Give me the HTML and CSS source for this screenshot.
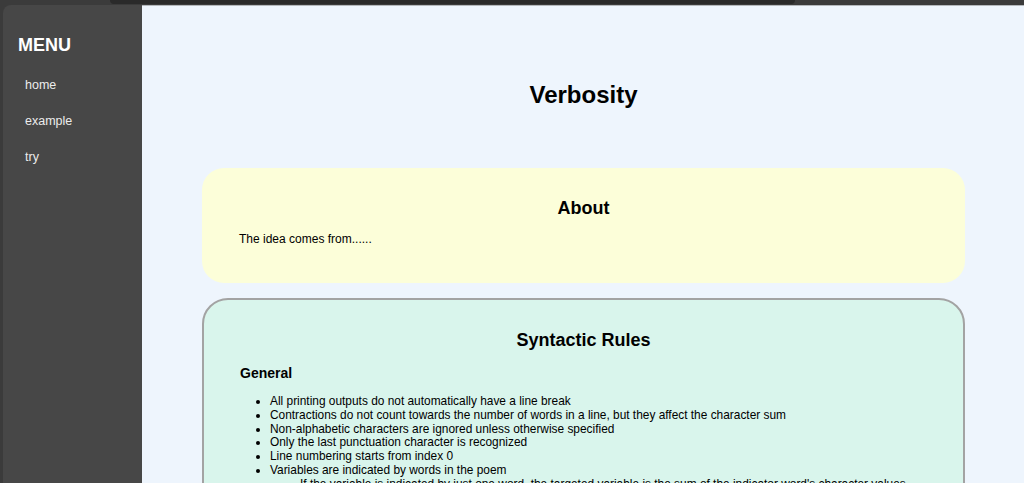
FILE: index.html
```html
<!DOCTYPE html>
<html lang="en">
<head>
<meta charset="utf-8">
<title>Verbosity</title>
<link rel="stylesheet" href="styles.css">
</head>
<body>
<div class="topstrip"><div class="tab-shadow"></div></div>
<div class="frame">
  <nav class="sidebar">
    <h2 class="menu-title">MENU</h2>
    <ul class="menu">
      <li><a href="#">home</a></li>
      <li><a href="#">example</a></li>
      <li><a href="#">try</a></li>
    </ul>
  </nav>
  <main class="main">
    <h1 class="page-title">Verbosity</h1>
    <section class="card card-about">
      <h2 class="card-title">About</h2>
      <p class="card-text">The idea comes from......</p>
    </section>
    <section class="card card-rules">
      <h2 class="card-title">Syntactic Rules</h2>
      <h3 class="sub-title">General</h3>
      <ul class="rules">
        <li>All printing outputs do not automatically have a line break</li>
        <li>Contractions do not count towards the number of words in a line, but they affect the character sum</li>
        <li>Non-alphabetic characters are ignored unless otherwise specified</li>
        <li>Only the last punctuation character is recognized</li>
        <li>Line numbering starts from index 0</li>
        <li>Variables are indicated by words in the poem
          <ul class="rules-sub">
            <li>If the variable is indicated by just one word, the targeted variable is the sum of the indicator word's character values</li>
            <li>If the variable is indicated by more than one word, the targeted variable is the sum of all the words' character values</li>
          </ul>
        </li>
      </ul>
    </section>
  </main>
</div>
</body>
</html>
```
FILE: styles.css
```css
html, body {
  margin: 0;
  padding: 0;
  height: 100%;
}
body {
  background: #3b3b3b;
  font-family: "Liberation Sans", Arial, sans-serif;
  font-size: 12px;
  color: #000;
  overflow: hidden;
}
.topstrip {
  height: 5px;
  display: flex;
}
.tab-shadow {
  margin-left: 110px;
  width: 685px;
  height: 4px;
  background: #2a2a2a;
  border-radius: 0 0 8px 8px;
}
.frame {
  display: flex;
  height: calc(100% - 5px);
  padding-left: 3px;
}
.sidebar {
  width: 139px;
  flex: none;
  background: #474747;
  border-top-left-radius: 8px;
  padding-top: 30px;
  box-sizing: border-box;
}
.menu-title {
  margin: 0 0 0 15px;
  font-size: 18px;
  line-height: 21px;
  font-weight: bold;
  color: #fff;
}
.menu {
  list-style: none;
  margin: 22px 0 0 0;
  padding: 0 0 0 22px;
}
.menu li {
  height: 36px;
  line-height: 14px;
}
.menu a {
  color: #ececec;
  text-decoration: none;
  font-size: 12.5px;
}
.main {
  flex: 1;
  background: #eef5fd;
  border-top: 1px solid #b4b8bc;
  padding: 75px 59px 0 60px;
}
.page-title {
  margin: 0 0 59px 0;
  text-align: center;
  font-size: 24px;
  line-height: 28px;
  font-weight: bold;
}
.card {
  border-radius: 22px;
}
.card-about {
  background: #fcfed9;
  padding: 30px 37px 37px 37px;
}
.card-rules {
  margin-top: 15px;
  background: #d9f5ec;
  border: 2px solid #a3a3a3;
  border-radius: 26px;
  padding: 30px 36px 20px 36px;
}
.card-title {
  margin: 0;
  text-align: center;
  font-size: 18px;
  line-height: 21px;
  font-weight: bold;
}
.card-text {
  margin: 13px 0 0 0;
  line-height: 14px;
}
.sub-title {
  margin: 14px 0 0 0;
  font-size: 14px;
  line-height: 16px;
  font-weight: bold;
}
.rules {
  margin: 14px 0 0 0;
  padding-left: 30px;
  line-height: 13.8px;
  font-size: 11.9px;
}
.rules-sub {
  margin: 0;
  padding-left: 30px;
  list-style-type: square;
}
```
